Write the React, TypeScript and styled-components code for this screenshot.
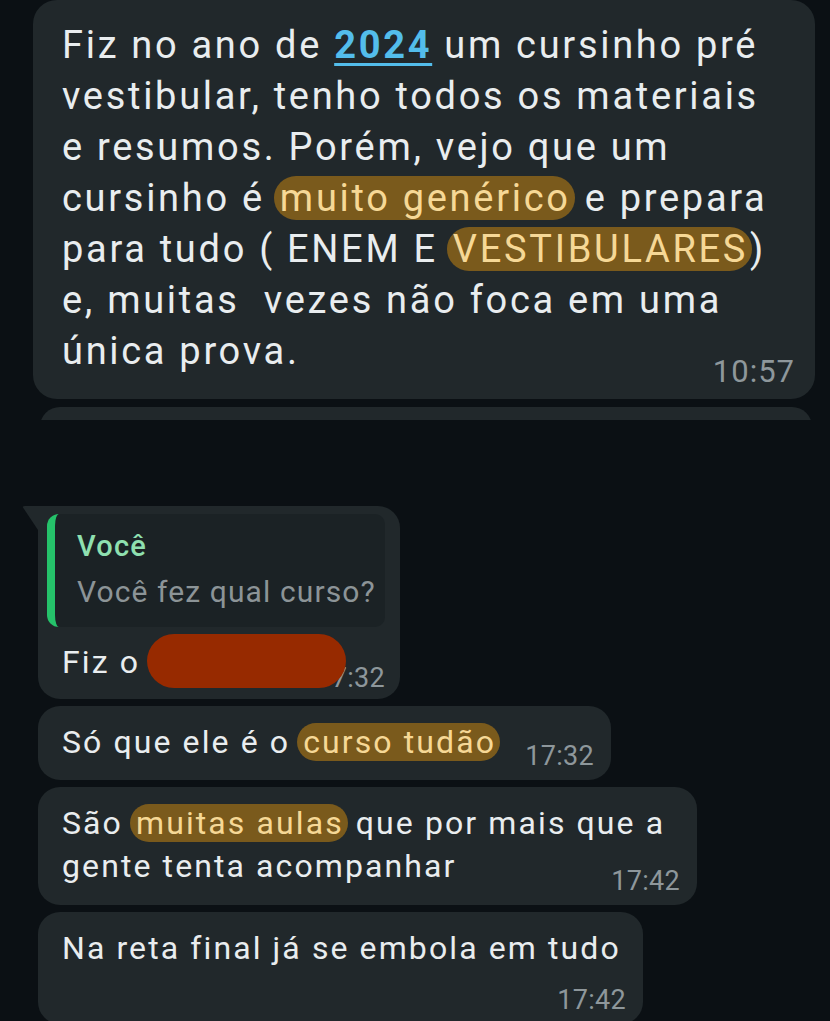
import React from 'react';
import styled, { createGlobalStyle } from 'styled-components';

const GlobalStyle = createGlobalStyle`
  html, body {
    margin: 0;
    padding: 0;
    background: #0b1014;
  }
  body {
    font-family: Roboto, "Noto Sans", "Liberation Sans", sans-serif;
  }
`;

const colors = {
  page: '#0b1014',
  bubble: '#21282b',
  quote: '#1b2225',
  text: '#e9edef',
  time: '#8e979b',
  link: '#53bdeb',
  markBg: '#7a5a1c',
  markText: '#f6d896',
  green: '#25c26a',
  mint: '#8fe0b0',
  quoteText: '#8c9497',
  redact: '#972a00',
};

const Screen = styled.div`
  width: 830px;
  height: 1021px;
  overflow: hidden;
  background: ${colors.page};
  display: flex;
  flex-direction: column;
`;

const TopArea = styled.div`
  padding: 0 15px 0 33px;
  display: flex;
  flex-direction: column;
  gap: 8px;
`;

const BigBubble = styled.div`
  background: ${colors.bubble};
  border-radius: 24px;
  padding: 20px 20px 12px 29px;
  color: ${colors.text};
  font-size: 38px;
  letter-spacing: 2.7px;
  line-height: 51px;
  white-space: nowrap;
`;

const Peek = styled.div`
  height: 13px;
  overflow: hidden;
  margin: 0 3px 0 7px;
`;

const PeekBubble = styled.div`
  height: 40px;
  background: ${colors.bubble};
  border-radius: 24px;
`;

const Link = styled.span`
  color: ${colors.link};
  font-weight: 700;
  text-decoration: underline;
  text-decoration-thickness: 3px;
  text-underline-offset: 5px;
`;

const Mark = styled.span`
  background: ${colors.markBg};
  color: ${colors.markText};
  border-radius: 22px;
  padding: 0 4px 0 6px;
  margin: 0 -2px 0 -3px;
`;

const Time = styled.div<{ $size?: number; $overlap?: number; $gap?: number }>`
  text-align: right;
  color: ${colors.time};
  font-size: ${(p) => p.$size ?? 27}px;
  letter-spacing: ${(p) => (p.$size ? 1 : 0.3)}px;
  line-height: 1;
  margin-top: ${(p) => (p.$gap ?? 0) - (p.$overlap ?? 0)}px;
`;

const ChatArea = styled.div`
  margin-top: 86px;
  padding-left: 38px;
  display: flex;
  flex-direction: column;
  align-items: flex-start;
  gap: 7px;
`;

const Bubble = styled.div<{ $width: number; $tail?: boolean }>`
  position: relative;
  width: ${(p) => p.$width}px;
  box-sizing: border-box;
  background: ${colors.bubble};
  border-radius: ${(p) => (p.$tail ? '0 22px 22px 22px' : '22px')};
  padding: 15px 17px 10px 24px;
  color: ${colors.text};
  font-size: 32px;
  letter-spacing: 2.1px;
  line-height: 43px;
  white-space: nowrap;

  ${(p) =>
    p.$tail &&
    `
    &::before {
      content: '';
      position: absolute;
      left: -16px;
      top: 0;
      width: 16px;
      height: 24px;
      background: ${colors.bubble};
      clip-path: polygon(0 0, 100% 0, 100% 100%);
      border-top-left-radius: 3px;
    }
  `}
`;

const ReplyBubble = styled(Bubble)`
  padding: 8px 15px 15px 9px;
`;

const Quote = styled.div`
  background: ${colors.quote};
  border-radius: 10px;
  border-left: 8px solid ${colors.green};
  border-top-left-radius: 12px;
  border-bottom-left-radius: 12px;
  padding: 13px 12px 12px 22px;
`;

const QuoteName = styled.div`
  color: ${colors.mint};
  font-size: 29px;
  font-weight: 500;
  letter-spacing: 1.2px;
  line-height: 38px;
`;

const QuoteText = styled.div`
  color: ${colors.quoteText};
  font-size: 30px;
  letter-spacing: 1.1px;
  line-height: 46px;
  margin-top: 4px;
`;

const Row = styled.div`
  position: relative;
  display: flex;
  align-items: flex-end;
  justify-content: space-between;
  gap: 20px;
  margin-bottom: 6px;
`;

const ReplyRow = styled(Row)`
  margin: 14px 0 0 15px;
`;

const Redaction = styled.span`
  position: absolute;
  left: 85px;
  top: -7px;
  width: 199px;
  height: 54px;
  border-radius: 27px;
  background: ${colors.redact};
`;

const InlineTime = styled.span<{ $drop: number }>`
  color: ${colors.time};
  font-size: 27px;
  letter-spacing: 0.3px;
  line-height: 27px;
  margin-bottom: ${(p) => -p.$drop}px;
`;

export default function App() {
  return (
    <>
      <GlobalStyle />
      <Screen>
        <TopArea>
          <BigBubble>
            Fiz no ano de <Link>2024</Link> um cursinho pré
            <br />
            vestibular, tenho todos os materiais
            <br />
            e resumos. Porém, vejo que um
            <br />
            cursinho é <Mark>muito genérico</Mark> e prepara
            <br />
            para tudo ( ENEM E <Mark>VESTIBULARES</Mark>)
            <br />
            e, muitas&nbsp; vezes não foca em uma
            <br />
            única prova.
            <Time $size={31} $overlap={21}>10:57</Time>
          </BigBubble>
          <Peek>
            <PeekBubble />
          </Peek>
        </TopArea>

        <ChatArea>
          <ReplyBubble $width={362} $tail>
            <Quote>
              <QuoteName>Você</QuoteName>
              <QuoteText>Você fez qual curso?</QuoteText>
            </Quote>
            <ReplyRow>
              <span>Fiz o</span>
              <InlineTime $drop={8}>17:32</InlineTime>
              <Redaction />
            </ReplyRow>
          </ReplyBubble>

          <Bubble $width={573}>
            <Row>
              <span>
                Só que ele é o <Mark>curso tudão</Mark>
              </span>
              <InlineTime $drop={6}>17:32</InlineTime>
            </Row>
          </Bubble>

          <Bubble $width={659}>
            São <Mark>muitas aulas</Mark> que por mais que a
            <br />
            gente tenta acompanhar
            <Time $overlap={20}>17:42</Time>
          </Bubble>

          <Bubble $width={605}>
            Na reta final já se embola em tudo
            <Time $gap={17}>17:42</Time>
          </Bubble>
        </ChatArea>
      </Screen>
    </>
  );
}
